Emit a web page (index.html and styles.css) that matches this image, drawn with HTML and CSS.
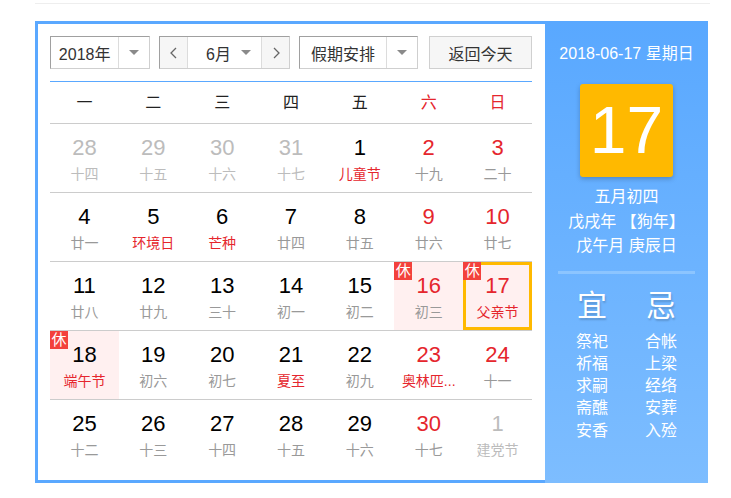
FILE: index.html
```html
<!DOCTYPE html>
<html>
<head>
<meta charset="utf-8">
<link rel="stylesheet" href="styles.css">
</head>
<body>
<div class="topline"></div>
<div class="calendar">
  <div class="main">
    <div class="controls">
      <div class="select year">
        <span class="sel-text">2018年</span>
        <span class="sel-arrow"><i class="tri"></i></span>
      </div>
      <div class="select month">
        <span class="nav"><svg width="10" height="14" viewBox="0 0 10 14"><polyline points="7,2 2,7 7,12" fill="none" stroke="#666" stroke-width="1.3"/></svg></span>
        <span class="sel-text mtext">6月<i class="tri"></i></span>
        <span class="nav nav-r"><svg width="10" height="14" viewBox="0 0 10 14"><polyline points="3,2 8,7 3,12" fill="none" stroke="#666" stroke-width="1.3"/></svg></span>
      </div>
      <div class="select holiday">
        <span class="sel-text">假期安排</span>
        <span class="sel-arrow"><i class="tri"></i></span>
      </div>
      <div class="btn-today">返回今天</div>
    </div>
    <div class="weekhead">
      <span>一</span><span>二</span><span>三</span><span>四</span><span>五</span><span class="we">六</span><span class="we">日</span>
    </div>
    <div class="grid">
      <div class="row">
        <div class="cell out"><b>28</b><em>十四</em></div>
        <div class="cell out"><b>29</b><em>十五</em></div>
        <div class="cell out"><b>30</b><em>十六</em></div>
        <div class="cell out"><b>31</b><em>十七</em></div>
        <div class="cell"><b>1</b><em class="fest">儿童节</em></div>
        <div class="cell wk"><b>2</b><em>十九</em></div>
        <div class="cell wk"><b>3</b><em>二十</em></div>
      </div>
      <div class="row">
        <div class="cell"><b>4</b><em>廿一</em></div>
        <div class="cell"><b>5</b><em class="fest">环境日</em></div>
        <div class="cell"><b>6</b><em class="fest">芒种</em></div>
        <div class="cell"><b>7</b><em>廿四</em></div>
        <div class="cell"><b>8</b><em>廿五</em></div>
        <div class="cell wk"><b>9</b><em>廿六</em></div>
        <div class="cell wk"><b>10</b><em>廿七</em></div>
      </div>
      <div class="row">
        <div class="cell"><b>11</b><em>廿八</em></div>
        <div class="cell"><b>12</b><em>廿九</em></div>
        <div class="cell"><b>13</b><em>三十</em></div>
        <div class="cell"><b>14</b><em>初一</em></div>
        <div class="cell"><b>15</b><em>初二</em></div>
        <div class="cell wk rest"><span class="badge">休</span><b>16</b><em>初三</em></div>
        <div class="cell wk rest today"><span class="badge">休</span><b>17</b><em class="fest">父亲节</em></div>
      </div>
      <div class="row">
        <div class="cell rest"><span class="badge">休</span><b>18</b><em class="fest">端午节</em></div>
        <div class="cell"><b>19</b><em>初六</em></div>
        <div class="cell"><b>20</b><em>初七</em></div>
        <div class="cell"><b>21</b><em class="fest">夏至</em></div>
        <div class="cell"><b>22</b><em>初九</em></div>
        <div class="cell wk"><b>23</b><em class="fest">奥林匹...</em></div>
        <div class="cell wk"><b>24</b><em>十一</em></div>
      </div>
      <div class="row">
        <div class="cell"><b>25</b><em>十二</em></div>
        <div class="cell"><b>26</b><em>十三</em></div>
        <div class="cell"><b>27</b><em>十四</em></div>
        <div class="cell"><b>28</b><em>十五</em></div>
        <div class="cell"><b>29</b><em>十六</em></div>
        <div class="cell wk"><b>30</b><em>十七</em></div>
        <div class="cell out"><b>1</b><em>建党节</em></div>
      </div>
    </div>
  </div>
  <div class="side">
    <div class="side-date">2018-06-17 星期日</div>
    <div class="bigday">17</div>
    <div class="lunar-info">
      <div>五月初四</div>
      <div>戊戌年 【狗年】</div>
      <div>戊午月 庚辰日</div>
    </div>
    <div class="sep"></div>
    <div class="yiji">
      <div class="col">
        <div class="yj-title">宜</div>
        <div class="yj-item">祭祀</div>
        <div class="yj-item">祈福</div>
        <div class="yj-item">求嗣</div>
        <div class="yj-item">斋醮</div>
        <div class="yj-item">安香</div>
      </div>
      <div class="col">
        <div class="yj-title">忌</div>
        <div class="yj-item">合帐</div>
        <div class="yj-item">上梁</div>
        <div class="yj-item">经络</div>
        <div class="yj-item">安葬</div>
        <div class="yj-item">入殓</div>
      </div>
    </div>
  </div>
</div>
</body>
</html>
```
FILE: styles.css
```css
* { box-sizing: border-box; }
body {
  margin: 0;
  background: #fff;
  font-family: "Liberation Sans", "Noto Sans CJK SC", sans-serif;
  color: #000;
}
.topline {
  margin: 3px 0 0 35px;
  width: 675px;
  height: 1px;
  background: #eeeeee;
}
.calendar {
  margin: 17px 0 0 35px;
  display: flex;
  width: 673px;
  height: 462px;
}
.main {
  width: 510px;
  height: 462px;
  border: 3px solid #5aa8ff;
  border-right: none;
  padding: 12px 13px 0 12px;
  background: #fff;
}
.controls {
  display: flex;
  height: 33px;
  font-size: 16px;
  color: #333;
}
.select {
  display: flex;
  height: 33px;
  border: 1px solid;
  border-color: #a0a0a0 #cfcfcf #cfcfcf #a0a0a0;
  background: #fff;
}
.sel-text {
  display: flex;
  align-items: center;
  justify-content: center;
}
.sel-arrow {
  display: flex;
  align-items: center;
  justify-content: center;
  width: 31px;
  border-left: 1px solid #dcdcdc;
}
.tri {
  display: block;
  width: 0;
  height: 0;
  border-left: 5px solid transparent;
  border-right: 5px solid transparent;
  border-top: 5px solid #8a8a8a;
}
.year { width: 100px; }
.year .sel-text { width: 68px; }
.month { width: 131px; margin-left: 9px; }
.nav {
  width: 28px;
  display: flex;
  align-items: center;
  justify-content: center;
  background: #f6f6f6;
  border-right: 1px solid #dcdcdc;
}
.nav-r { border-right: none; border-left: 1px solid #dcdcdc; }
.mtext {
  flex: 1;
  justify-content: space-between;
  padding: 0 10px 0 18px;
}
.holiday { width: 119px; margin-left: 9px; }
.holiday .sel-text { width: 87px; }
.btn-today {
  width: 103px;
  height: 33px;
  margin-left: 11px;
  border: 1px solid #d0d0d0;
  background: #f6f6f6;
  display: flex;
  align-items: center;
  justify-content: center;
}
.weekhead {
  margin-top: 12px;
  border-top: 1px solid #5aa8ff;
  display: grid;
  grid-template-columns: repeat(7, 1fr);
  height: 42px;
  font-size: 16px;
  line-height: 41px;
  text-align: center;
  color: #222;
}
.weekhead .we { color: #e5262d; }
.row {
  display: grid;
  grid-template-columns: repeat(7, 1fr);
  border-top: 1px solid #cccccc;
  height: 69px;
}
.row:last-child { height: 68px; }
.cell {
  position: relative;
  text-align: center;
  padding-top: 11px;
  height: 68px;
}
.cell b {
  display: block;
  font-weight: normal;
  font-size: 22px;
  line-height: 26px;
  color: #000;
}
.cell em {
  display: block;
  font-style: normal;
  font-size: 14px;
  line-height: 18px;
  margin-top: 4px;
  color: #999;
  white-space: nowrap;
}
.cell.wk b { color: #e5262d; }
.cell em.fest { color: #e5262d; }
.cell.out b, .cell.out em { color: #bcbcbc; }
.cell.rest { background: #fff0f0; }
.cell.today {
  border: 3px solid #ffb900;
  padding-top: 8px;
}
.badge {
  position: absolute;
  left: 0;
  top: 0;
  width: 18px;
  height: 18px;
  background: #f3413c;
  color: #fff;
  font-size: 15px;
  line-height: 18px;
  text-align: center;
}
.today .badge { left: -3px; top: -3px; }
.side {
  width: 163px;
  height: 462px;
  background: linear-gradient(to bottom, #59a8ff, #7dbdff);
  color: #fff;
  text-align: center;
}
.side-date {
  font-size: 16px;
  line-height: 20px;
  margin-top: 23px;
}
.bigday {
  width: 93px;
  height: 93px;
  margin: 20px auto 0;
  background: #ffb900;
  border-radius: 3px;
  box-shadow: 0 2px 5px rgba(0, 0, 0, 0.22);
  font-size: 66px;
  line-height: 93px;
}
.lunar-info {
  margin-top: 8px;
  font-size: 16px;
  line-height: 24.5px;
}
.sep {
  width: 137px;
  height: 3px;
  margin: 12px auto 0;
  background: #8cc5ff;
}
.yiji {
  display: flex;
  justify-content: center;
  gap: 37px;
  margin-top: 14px;
}
.col { width: 32px; }
.yj-title {
  font-size: 30px;
  line-height: 36px;
  text-shadow: 1px 2px 2px rgba(0, 0, 0, 0.18);
  margin-bottom: 7px;
}
.yj-item {
  font-size: 16px;
  line-height: 22.3px;
}
```
